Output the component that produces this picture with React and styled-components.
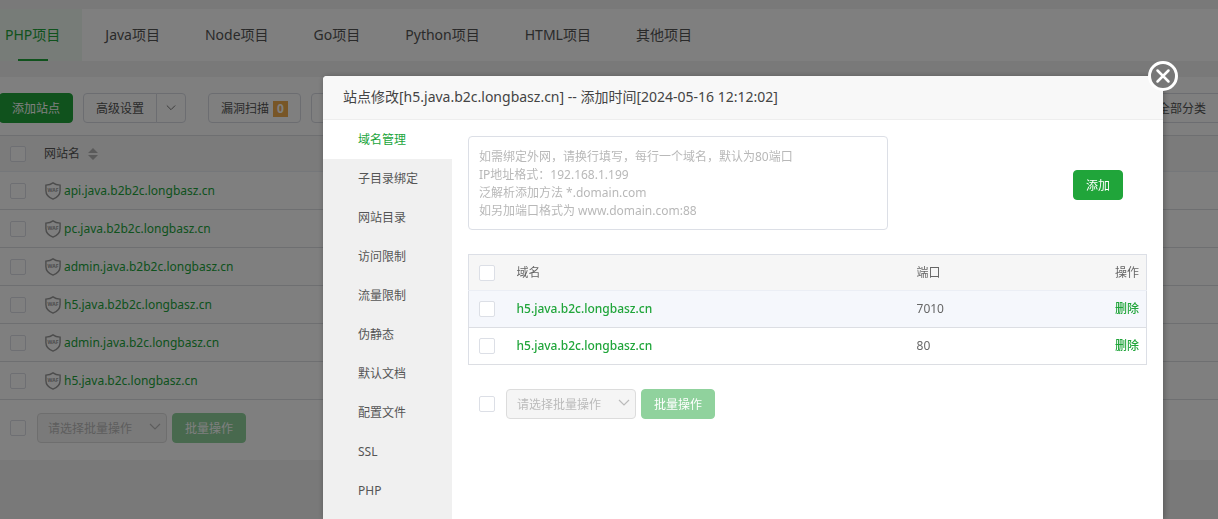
import React, { useState } from 'react';
import styled, { createGlobalStyle, css } from 'styled-components';

const GlobalStyle = createGlobalStyle`
* {
  box-sizing: border-box;
}

body {
  margin: 0;
  overflow: hidden;
  background: #f2f2f2;
  color: #555;
  font-family: "Noto Sans", "Noto Sans CJK SC", sans-serif;
  font-size: 12px;
  line-height: 18px;
}

button, select, textarea {
  font: inherit;
}
`;

const Page = styled.div`
min-height: 100vh;
padding-top: 9px;
overflow: hidden;
`;

const Tabs = styled.nav`
display: flex;
gap: 1px;
height: 52px;
margin-left: -17px;
margin-bottom: 16px;
background: white;
`;

const Tab = styled.a`
display: flex;
align-items: center;
position: relative;
padding: 0 22px;
font-size: 14px;
text-decoration: none;
color: ${(props) => (props.$active ? '#20a53a' : '#555')};
background: ${(props) => (props.$active ? '#eef8f0' : 'transparent')};

${(props) => props.$active && css`
  &::after {
    content: '';
    position: absolute;
    bottom: 0;
    left: 50%;
    width: 30px;
    height: 2px;
    margin-left: -15px;
    background: #20a53a;
  }
`}
`;

const Panel = styled.main`
padding: 16px 0 17px;
background: white;
`;

const Toolbar = styled.div`
display: flex;
margin-left: -1px;
margin-bottom: 12px;
`;

const ToolGroup = styled.div`
display: flex;
margin-left: ${(props) => props.$gap || 0}px;
`;

const Button = styled.button`
display: flex;
align-items: center;
justify-content: center;
gap: 4px;
height: 30px;
padding: 1px 12px 0;
color: #555;
background: white;
border: 1px solid #d8dbe3;
border-radius: 4px;
white-space: nowrap;
`;

const SplitLeft = styled(Button)`
border-radius: 4px 0 0 4px;
`;

const SplitRight = styled(Button)`
width: 30px;
padding: 0;
margin-left: -1px;
border-radius: 0 4px 4px 0;
`;

const GreenButton = styled(Button)`
color: white;
background: #20a53a;
border-color: #20a53a;

&:disabled {
  background: #90d29d;
  border-color: #90d29d;
}
`;

const Badge = styled.span`
width: 15px;
height: 16px;
line-height: 16px;
font-weight: 700;
text-align: center;
color: white;
background: #f0ad4e;
`;

const CategoryButton = styled(Button)`
margin-left: auto;
margin-right: -1px;
border-radius: 4px 0 0 4px;
`;

const Checkbox = styled.input.attrs({ type: 'checkbox' })`
appearance: none;
display: block;
flex: none;
width: 16px;
height: 16px;
margin: 0;
background: white;
border: 1px solid #dcdfe6;
border-radius: 2px;

&:checked {
  background: #20a53a;
  border-color: #20a53a;
}
`;

const Table = styled.table`
width: 100%;
border-collapse: collapse;
table-layout: fixed;

th, td {
  padding: 0 10px;
  text-align: left;
  font-weight: 400;
  border-bottom: 1px solid #dcdee3;
}

thead th {
  height: 36px;
  background: #f6f6f6;
  border-bottom-color: #ebeef5;
}
`;

const SiteTable = styled(Table)`
border-top: 1px solid #dcdee3;

td {
  height: 38px;
}

th + th, td + td {
  padding-left: 8px;
}
`;

const DomainTable = styled(Table)`
margin: 24px 0;
color: #666;
border: 1px solid #dcdfe6;

td {
  height: 37px;
}

th:last-child, td:last-child {
  padding-right: 7px;
  text-align: right;
}

tbody tr:first-child {
  background: #f5f7fc;
}

a {
  font-weight: 500;
}
`;

const Col = styled.col`
width: ${(props) => props.$width};
`;

const SiteCell = styled.div`
display: flex;
align-items: center;
gap: 3px;
padding-left: 1px;
`;

const HeadCell = styled.div`
display: flex;
align-items: center;
gap: 8px;
`;

const Link = styled.a`
color: #20a53a;
text-decoration: none;
`;

const Batch = styled.div`
display: flex;
align-items: center;
padding-left: ${(props) => props.$left || 10}px;
margin-top: ${(props) => props.$top || 0}px;
`;

const SelectBox = styled.span`
display: flex;
position: relative;
margin: 0 5px 0 11px;

svg {
  position: absolute;
  top: 8px;
  right: 6px;
  pointer-events: none;
}
`;

const Select = styled.select`
appearance: none;
width: 130px;
height: 30px;
padding: 1px 10px 0;
color: #bbb;
opacity: 1;
background: #f5f5f5;
border: 1px solid #dcdcdc;
border-radius: 4px;
`;

const Overlay = styled.div`
position: fixed;
inset: 0;
display: flex;
padding: 76px 55px 0 323px;
background: rgba(0, 0, 0, .5);
`;

const Modal = styled.section`
display: flex;
flex-direction: column;
flex: 1;
min-width: 0;
position: relative;
background: white;
border-radius: 4px 4px 0 0;
box-shadow: 1px 1px 6px rgba(0, 0, 0, .3);
`;

const ModalTitle = styled.h1`
height: 44px;
margin: 0;
padding-left: 20px;
font-size: 14px;
font-weight: 400;
line-height: 42px;
color: #444;
background: #f8f8f8;
border-bottom: 1px solid #eee;
border-radius: 4px 4px 0 0;
`;

const Close = styled.button`
position: absolute;
top: -15px;
right: -15px;
width: 30px;
height: 30px;
padding: 0;
background: none;
border: none;

svg {
  display: block;
}
`;

const ModalBody = styled.div`
display: flex;
flex: 1;
min-height: 0;
`;

const Side = styled.nav`
flex: none;
width: 129px;
overflow: hidden;
background: #f0f0f0;
`;

const SideLink = styled.a`
display: block;
padding-left: 35px;
line-height: 39px;
text-decoration: none;
color: ${(props) => (props.$active ? '#20a53a' : '#555')};
background: ${(props) => (props.$active ? 'white' : 'transparent')};
`;

const Content = styled.div`
flex: 1;
min-width: 0;
padding: 16px;
`;

const AddRow = styled.form`
display: flex;
align-items: center;
justify-content: space-between;
gap: 16px;
padding-right: 24px;

${GreenButton} {
  margin-top: 4px;
}
`;

const DomainInput = styled.textarea`
flex: 0 1 420px;
min-width: 0;
height: 94px;
padding: 11px 10px 9px;
resize: none;
color: #555;
border: 1px solid #dcdfe6;
border-radius: 4px;

&::placeholder {
  color: #b8b8b8;
  opacity: 1;
}
`;

const projects = ['PHP项目', 'Java项目', 'Node项目', 'Go项目', 'Python项目', 'HTML项目', '其他项目'];

const sites = [
  'api.java.b2b2c.longbasz.cn',
  'pc.java.b2b2c.longbasz.cn',
  'admin.java.b2b2c.longbasz.cn',
  'h5.java.b2b2c.longbasz.cn',
  'admin.java.b2c.longbasz.cn',
  'h5.java.b2c.longbasz.cn',
];

const menu = ['域名管理', '子目录绑定', '网站目录', '访问限制', '流量限制', '伪静态', '默认文档', '配置文件', 'SSL', 'PHP'];

const domains = [
  { name: 'h5.java.b2c.longbasz.cn', port: 7010 },
  { name: 'h5.java.b2c.longbasz.cn', port: 80 },
];

const hint = `如需绑定外网，请换行填写，每行一个域名，默认为80端口
IP地址格式：192.168.1.199
泛解析添加方法 *.domain.com
如另加端口格式为 www.domain.com:88`;

function Chevron({ size = 12, color = '#bbb' }) {
  return (
    <svg width={size} height={size} viewBox="0 0 12 12" fill="none" stroke={color} strokeWidth="1.2">
      <path d="M1 3l5 5 5-5" />
    </svg>
  );
}

function Shield() {
  return (
    <svg width="16" height="18" viewBox="0 0 16 18" aria-hidden="true">
      <path d="M8 .9C6 2.4 3.6 3 .9 3.1V8.5c0 4.2 2.6 7 7.1 8.6 4.5-1.6 7.1-4.4 7.1-8.6V3.1C12.4 3 10 2.4 8 .9z" fill="none" stroke="#999" strokeWidth="1.4" />
      <text x="8" y="10.4" textAnchor="middle" fontSize="5" fontWeight="700" fill="#999">WAF</text>
    </svg>
  );
}

function SortIcon() {
  return (
    <svg width="10" height="12" viewBox="0 0 10 12" fill="#b4b4b4" aria-hidden="true">
      <path d="M0 5l5-5 5 5zM0 7l5 5 5-5z" />
    </svg>
  );
}

function BatchBar({ top, left }) {
  return (
    <Batch $top={top} $left={left}>
      <Checkbox aria-label="全选" />
      <SelectBox>
        <Select disabled aria-label="批量操作">
          <option>请选择批量操作</option>
        </Select>
        <Chevron />
      </SelectBox>
      <GreenButton disabled>批量操作</GreenButton>
    </Batch>
  );
}

function SiteList() {
  return (
    <Page>
      <Tabs>
        {projects.map((name, i) => (
          <Tab href="#" key={name} $active={i === 0}>{name}</Tab>
        ))}
      </Tabs>
      <Panel>
        <Toolbar>
          <GreenButton>添加站点</GreenButton>
          <ToolGroup $gap={10}>
            <SplitLeft>高级设置</SplitLeft>
            <SplitRight aria-label="更多设置"><Chevron size={10} color="#777" /></SplitRight>
          </ToolGroup>
          <ToolGroup $gap={22}>
            <Button>漏洞扫描<Badge>0</Badge></Button>
          </ToolGroup>
          <ToolGroup $gap={10}>
            <Button aria-label="更多" />
          </ToolGroup>
          <CategoryButton>全部分类</CategoryButton>
        </Toolbar>
        <SiteTable>
          <colgroup>
            <Col $width="36px" />
            <Col />
          </colgroup>
          <thead>
            <tr>
              <th><Checkbox aria-label="全选" /></th>
              <th><HeadCell>网站名<SortIcon /></HeadCell></th>
            </tr>
          </thead>
          <tbody>
            {sites.map((site) => (
              <tr key={site}>
                <td><Checkbox aria-label={site} /></td>
                <td><SiteCell><Shield /><Link href="#">{site}</Link></SiteCell></td>
              </tr>
            ))}
          </tbody>
        </SiteTable>
        <BatchBar top={13} />
      </Panel>
    </Page>
  );
}

function SiteModal({ onClose }) {
  return (
    <Overlay>
      <Modal role="dialog" aria-labelledby="modal-title">
        <ModalTitle id="modal-title">站点修改[h5.java.b2c.longbasz.cn] -- 添加时间[2024-05-16 12:12:02]</ModalTitle>
        <Close aria-label="关闭" onClick={onClose}>
          <svg width="30" height="30" viewBox="0 0 30 30" stroke="white" strokeLinecap="round">
            <circle cx="15" cy="15" r="13.5" fill="#777" strokeWidth="3" />
            <path d="M9.5 9.5l11 11M20.5 9.5l-11 11" strokeWidth="2.5" />
          </svg>
        </Close>
        <ModalBody>
          <Side>
            {menu.map((name, i) => (
              <SideLink href="#" key={name} $active={i === 0}>{name}</SideLink>
            ))}
          </Side>
          <Content>
            <AddRow onSubmit={(e) => e.preventDefault()}>
              <DomainInput placeholder={hint} aria-label="域名" />
              <GreenButton type="submit">添加</GreenButton>
            </AddRow>
            <DomainTable>
              <colgroup>
                <Col $width="38px" />
                <Col $width="59%" />
                <Col />
                <Col $width="80px" />
              </colgroup>
              <thead>
                <tr>
                  <th><Checkbox aria-label="全选" /></th>
                  <th>域名</th>
                  <th>端口</th>
                  <th>操作</th>
                </tr>
              </thead>
              <tbody>
                {domains.map((domain) => (
                  <tr key={domain.port}>
                    <td><Checkbox aria-label={domain.name} /></td>
                    <td><Link href="#">{domain.name}</Link></td>
                    <td>{domain.port}</td>
                    <td><Link href="#">删除</Link></td>
                  </tr>
                ))}
              </tbody>
            </DomainTable>
            <BatchBar left={11} />
          </Content>
        </ModalBody>
      </Modal>
    </Overlay>
  );
}

export default function App() {
  const [open, setOpen] = useState(true);

  return (
    <>
      <GlobalStyle />
      <SiteList />
      {open && <SiteModal onClose={() => setOpen(false)} />}
    </>
  );
}
